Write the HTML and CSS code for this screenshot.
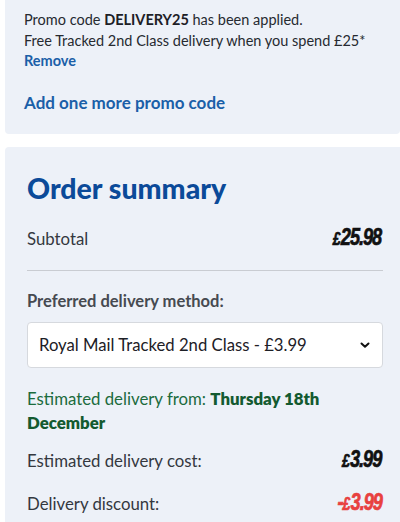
FILE: index.html
```html
<!DOCTYPE html>
<html>
<head>
<meta charset="utf-8">
<link rel="stylesheet" href="styles.css">
</head>
<body>
<div class="page">
  <section class="promo-panel">
    <p class="promo-line">Promo code <strong>DELIVERY25</strong> has been applied.</p>
    <p class="promo-line">Free Tracked 2nd Class delivery when you spend £25*</p>
    <a class="link remove">Remove</a>
    <a class="link add-more">Add one more promo code</a>
  </section>
  <section class="summary-panel">
    <h2 class="summary-title">Order summary</h2>
    <div class="row subtotal">
      <span class="label">Subtotal</span>
      <span class="price"><span class="pound">£</span>25.98</span>
    </div>
    <hr class="divider">
    <div class="method-label">Preferred delivery method:</div>
    <div class="select">
      <span class="select-text">Royal Mail Tracked 2nd Class - £3.99</span>
      <svg class="chevron" width="12" height="8" viewBox="0 0 12 8"><path d="M2.5 2.5 L6 5.8 L9.5 2.5" fill="none" stroke="#111" stroke-width="2" stroke-linecap="round" stroke-linejoin="round"/></svg>
    </div>
    <div class="estimate">
      <div class="estimate-line">Estimated delivery from: <strong>Thursday 18th</strong></div>
      <div class="estimate-line"><strong>December</strong></div>
    </div>
    <div class="row cost">
      <span class="label">Estimated delivery cost:</span>
      <span class="price"><span class="pound">£</span>3.99</span>
    </div>
    <div class="row discount">
      <span class="label">Delivery discount:</span>
      <span class="price red">-<span class="pound">£</span>3.99</span>
    </div>
  </section>
</div>
</body>
</html>
```
FILE: styles.css
```css
* { box-sizing: border-box; }
body {
  margin: 0;
  background: #ffffff;
  font-family: Lato, "Open Sans", sans-serif;
  color: #2b2f36;
}
.page {
  display: flex;
  flex-direction: column;
  gap: 13px;
  padding-left: 5px;
}
.promo-panel {
  background: #edf1f8;
  border-radius: 0 0 4px 4px;
  height: 134px;
  padding: 10px 0 0 19px;
  display: flex;
  flex-direction: column;
}
.promo-line {
  margin: 0;
  font-size: 14.5px;
  line-height: 20.5px;
  color: #262a30;
  white-space: nowrap;
}
.promo-line strong { font-weight: 700; color: #1d2026; }
.link {
  color: #1b5fa8;
  font-weight: 700;
}
.remove {
  font-size: 14.5px;
  line-height: 20.5px;
}
.add-more {
  font-size: 17px;
  line-height: 22px;
  margin-top: 20px;
}
.summary-panel {
  background: #edf1f8;
  border-radius: 4px 0 0 0;
  padding: 25px 17px 0 22px;
  height: 400px;
}
.summary-title {
  margin: 0;
  font-size: 28.5px;
  line-height: 32px;
  font-weight: 900;
  color: #0b4a99;
}
.row {
  display: flex;
  justify-content: space-between;
  align-items: center;
}
.label {
  font-size: 16.8px;
  color: #34383f;
}
.price {
  font-family: "Liberation Sans", sans-serif;
  font-style: italic;
  font-weight: 700;
  font-size: 24px;
  line-height: 26px;
  letter-spacing: -1.4px;
  color: #111;
  -webkit-text-stroke: 0.7px currentColor;
  padding-right: 2px;
  transform: scaleX(0.76);
  transform-origin: right center;
}
.pound { font-size: 18px; margin-right: 2px; }
.price.red { color: #e8403f; }
.subtotal {
  margin-top: 21px;
  height: 26px;
}
.divider {
  border: 0;
  border-top: 1px solid #c9ccd2;
  margin: 19px 0 0 0;
}
.method-label {
  margin-top: 19px;
  font-size: 16.5px;
  font-weight: 700;
  color: #464a51;
  line-height: 22px;
}
.select {
  margin-top: 10px;
  height: 46px;
  background: #fff;
  border: 1px solid #d6d9de;
  border-radius: 4px;
  display: flex;
  align-items: center;
  justify-content: space-between;
  padding: 0 11px 0 11px;
}
.select-text {
  font-size: 16.7px;
  color: #1d2026;
}
.estimate {
  margin-top: 19px;
  font-size: 16.8px;
  line-height: 23.5px;
  color: #1b6b3d;
}
.estimate strong { color: #135a30; font-weight: 800; }
.cost {
  margin-top: 13px;
  height: 26px;
}
.discount {
  margin-top: 17px;
  height: 26px;
}
```
